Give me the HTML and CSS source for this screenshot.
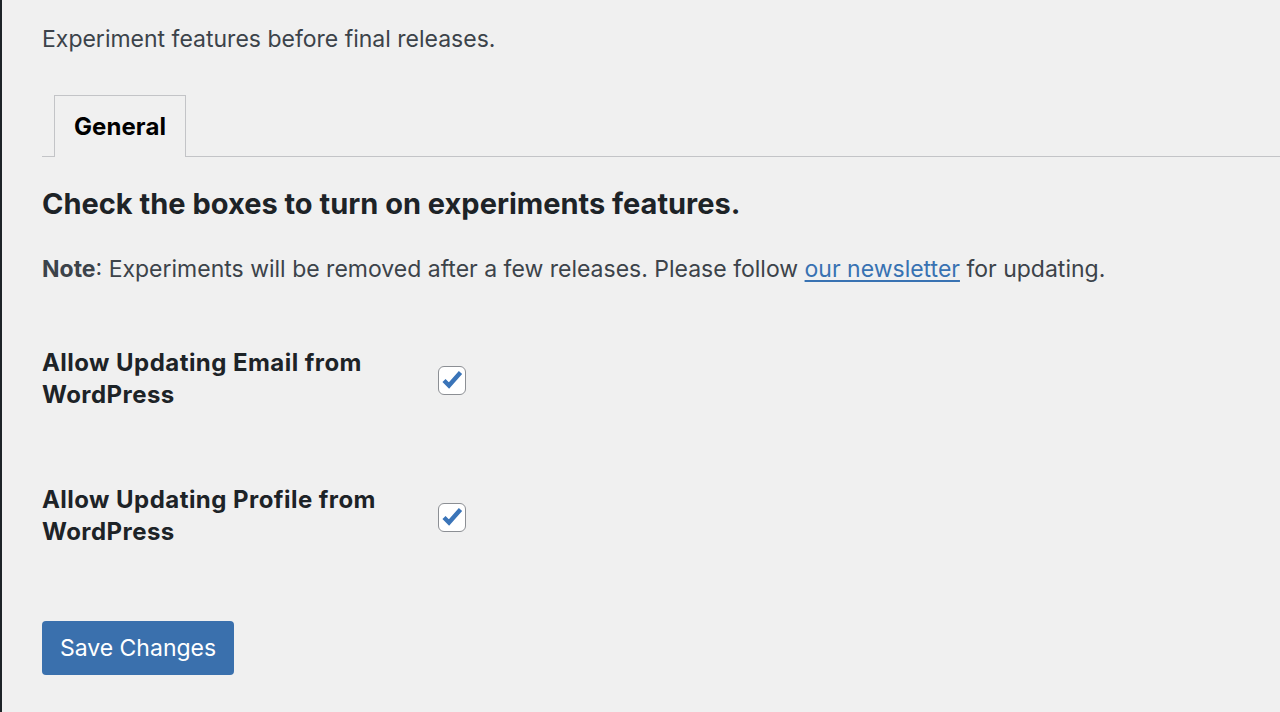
FILE: index.html
```html
<!DOCTYPE html>
<html lang="en">
<head>
<meta charset="utf-8">
<title>Experiments</title>
<link rel="stylesheet" href="styles.css">
</head>
<body>
<div class="page">
  <p class="desc">Experiment features before final releases.</p>
  <nav class="tabs">
    <a class="tab active" href="#">General</a>
  </nav>
  <h2 class="title">Check the boxes to turn on experiments features.</h2>
  <p class="note"><strong>Note</strong>: Experiments will be removed after a few releases. Please follow <a href="#" class="link">our newsletter</a> for updating.</p>
  <form class="form">
    <div class="row">
      <div class="label">Allow Updating Email from WordPress</div>
      <div class="field">
        <span class="checkbox"><svg viewBox="0 0 28 29" width="28" height="29"><path d="M6 14.5 L11 19.5 L22.5 6.5" fill="none" stroke="#3a74b8" stroke-width="4.4" stroke-linejoin="miter"/></svg></span>
      </div>
    </div>
    <div class="row">
      <div class="label">Allow Updating Profile from WordPress</div>
      <div class="field">
        <span class="checkbox"><svg viewBox="0 0 28 29" width="28" height="29"><path d="M6 14.5 L11 19.5 L22.5 6.5" fill="none" stroke="#3a74b8" stroke-width="4.4" stroke-linejoin="miter"/></svg></span>
      </div>
    </div>
    <div class="actions">
      <button type="button" class="btn">Save Changes</button>
    </div>
  </form>
</div>
</body>
</html>
```
FILE: styles.css
```css
html, body {
  margin: 0;
  padding: 0;
  background: #f0f0f0;
}
body {
  font-family: Inter, "Noto Sans", "Liberation Sans", sans-serif;
  color: #3c434a;
  height: 712px;
  overflow: hidden;
}
.page {
  border-left: 2px solid #1d2327;
  min-height: 712px;
  box-sizing: border-box;
  padding: 24px 0 0 40px;
}
.desc {
  margin: 0;
  font-size: 23px;
  line-height: 30px;
  color: #3c434a;
}
.tabs {
  display: flex;
  margin-top: 41px;
  padding-left: 12px;
  border-bottom: 1px solid #c3c4c7;
}
.tab {
  display: block;
  box-sizing: border-box;
  width: 132px;
  height: 62px;
  margin-bottom: -1px;
  border: 1px solid #c3c4c7;
  border-bottom: none;
  background: #f0f0f0;
  font-size: 24px;
  font-weight: 700;
  letter-spacing: 0.1px;
  color: #000;
  text-decoration: none;
  text-align: center;
  line-height: 62px;
}
.title {
  margin: 29px 0 0;
  font-size: 29px;
  line-height: 36px;
  font-weight: 700;
  color: #1d2327;
}
.note {
  margin: 32px 0 0;
  font-size: 23px;
  line-height: 30px;
  color: #3c434a;
}
.note strong {
  font-weight: 700;
  color: #3c434a;
}
.link {
  color: #3872b2;
  text-decoration: underline;
  text-underline-offset: 3px;
}
.form {
  margin-top: 26px;
}
.row {
  display: flex;
  align-items: center;
  height: 137px;
}
.label {
  width: 340px;
  font-size: 24px;
  line-height: 32px;
  font-weight: 700;
  letter-spacing: 0.45px;
  color: #1d2327;
}
.field {
  padding-left: 56px;
  display: flex;
  margin-top: 3px;
}
.checkbox {
  display: block;
  box-sizing: border-box;
  width: 28px;
  height: 29px;
  border: 1px solid #8c8f94;
  border-radius: 6px;
  background: #fff;
  overflow: hidden;
}
.checkbox svg {
  display: block;
  margin: -1px;
}
.actions {
  margin-top: 37px;
}
.btn {
  width: 192px;
  height: 54px;
  border: none;
  border-radius: 4px;
  background: #3a70ad;
  color: #fff;
  font-family: inherit;
  font-size: 23px;
  padding: 0;
}
```
